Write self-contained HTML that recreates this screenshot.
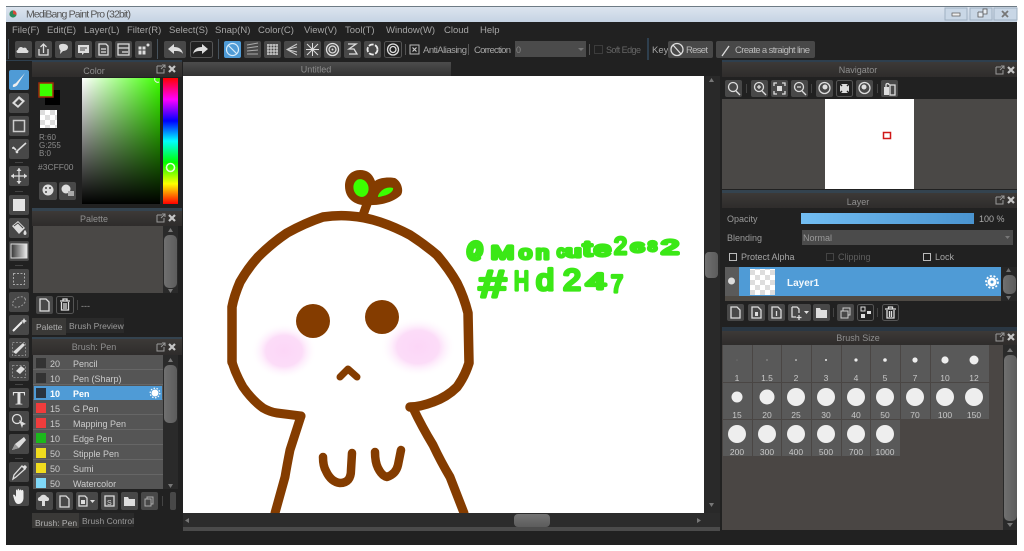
<!DOCTYPE html>
<html><head><meta charset="utf-8"><title>MediBang Paint Pro</title>
<style>
html,body{margin:0;padding:0;background:#fff;width:1024px;height:551px;overflow:hidden}
svg{display:block;font-family:"Liberation Sans",sans-serif}
.ui{filter:blur(.25px)}
text{font-size:9px;fill:#a9a9a9}
.m text,text.m{font-size:9.5px;fill:#a5a5a5}
.h{text-anchor:middle;fill:#8f8f8f;font-size:9px}
.b{fill:#484848}
.bd{fill:#222;stroke:#555;stroke-width:1}
.i{fill:#ddd}
.s{fill:none;stroke:#ddd;stroke-width:1.3}
.d{fill:#6f6f6f}
.c{fill:#595959}
.w{fill:#eee}
.l{text-anchor:middle;font-size:8.5px;fill:#c8c8c8}
.r text,text.r{font-size:9.5px;fill:#d0d0d0}
.g text{fill:#3be816;stroke:#3be816;stroke-width:3.2;stroke-linejoin:round;stroke-linecap:round;font-weight:normal;font-family:"Liberation Sans",sans-serif}
.br{fill:none;stroke:#843c00;stroke-linecap:round;stroke-linejoin:round}
</style></head><body>
<svg width="1024" height="551" viewBox="0 0 1024 551" xmlns="http://www.w3.org/2000/svg">
<defs>
<linearGradient id="tb" x1="0" y1="0" x2="0" y2="1"><stop offset="0" stop-color="#dde5ef"/><stop offset="1" stop-color="#c5d3e3"/></linearGradient>
<linearGradient id="ph" x1="0" y1="0" x2="0" y2="1"><stop offset="0" stop-color="#3c3937"/><stop offset="1" stop-color="#2e2c2b"/></linearGradient>
<linearGradient id="tab" x1="0" y1="0" x2="0" y2="1"><stop offset="0" stop-color="#4c4c4c"/><stop offset="1" stop-color="#333"/></linearGradient>
<linearGradient id="sat"><stop offset="0" stop-color="#fff"/><stop offset="1" stop-color="#3cff00"/></linearGradient>
<linearGradient id="val" x1="0" y1="0" x2="0" y2="1"><stop offset="0" stop-color="#000" stop-opacity="0"/><stop offset="1" stop-color="#000"/></linearGradient>
<linearGradient id="hue" x1="0" y1="0" x2="0" y2="1"><stop offset="0" stop-color="#f00"/><stop offset=".17" stop-color="#f0f"/><stop offset=".34" stop-color="#00f"/><stop offset=".5" stop-color="#0ff"/><stop offset=".67" stop-color="#0f0"/><stop offset=".84" stop-color="#ff0"/><stop offset="1" stop-color="#f00"/></linearGradient>
<linearGradient id="op"><stop offset="0" stop-color="#72bdf2"/><stop offset="1" stop-color="#4a94d0"/></linearGradient>
<linearGradient id="sb"><stop offset="0" stop-color="#707070"/><stop offset="1" stop-color="#5c5c5c"/></linearGradient>
<linearGradient id="sbh" x1="0" y1="0" x2="0" y2="1"><stop offset="0" stop-color="#747474"/><stop offset="1" stop-color="#5c5c5c"/></linearGradient>
<linearGradient id="gr2"><stop offset="0" stop-color="#333"/><stop offset="1" stop-color="#eee"/></linearGradient>
<radialGradient id="pk"><stop offset="0" stop-color="#fcd6f7"/><stop offset=".55" stop-color="#fcdcf8"/><stop offset="1" stop-color="#fff" stop-opacity="0"/></radialGradient>
<pattern id="ck" width="10" height="10" patternUnits="userSpaceOnUse"><rect width="10" height="10" fill="#fff"/><rect width="5" height="5" fill="#ddd"/><rect x="5" y="5" width="5" height="5" fill="#ddd"/></pattern>
<g id="hd"><path d="M0 1h5M0 1v7h7V4M5 0l3 0v3M8 0L4 4" fill="none" stroke="#9a9a9a" stroke-width="1"/><path d="M12 1l6 6M18 1l-6 6" stroke="#c5c5c5" stroke-width="2.2"/></g>
</defs>
<rect width="1024" height="551" fill="#fff"/>
<g class="ui">
<rect x="6" y="6" width="1011" height="539" fill="#212121"/>
<!-- title bar -->
<rect x="6" y="6" width="1011" height="16" fill="url(#tb)"/>
<rect x="6" y="6" width="1011" height="1" fill="#6e7b85"/>
<circle cx="13" cy="14" r="3.6" fill="#2c8a5a"/><path d="M13 10.4a3.6 3.6 0 0 1 3.4 4.6L13 14z" fill="#d9483b"/>
<text x="26" y="17.5" style="font-size:10.5px;fill:#555" textLength="105">MediBang Paint Pro (32bit)</text>
<rect x="945" y="8" width="22" height="12" fill="#c9d7e6" stroke="#9fb0c2"/><rect x="952" y="13" width="8" height="3" fill="#eee" stroke="#555" stroke-width=".7"/>
<rect x="970" y="8" width="22" height="12" fill="#c9d7e6" stroke="#9fb0c2"/><path d="M978 12h5v-3h4v5h-4M978 12v5h5v-5" fill="#e8eef4" stroke="#555" stroke-width=".8"/>
<rect x="994" y="8" width="23" height="12" fill="#c9d7e6" stroke="#9fb0c2"/><path d="M1002 11l6 6M1008 11l-6 6" stroke="#777" stroke-width="1.8"/>
<!-- menu -->
<g class="m">
<text x="12" y="33">File(F)</text><text x="47" y="33">Edit(E)</text><text x="84" y="33">Layer(L)</text><text x="127" y="33">Filter(R)</text><text x="169" y="33">Select(S)</text><text x="215" y="33">Snap(N)</text><text x="258" y="33">Color(C)</text><text x="304" y="33">View(V)</text><text x="345" y="33">Tool(T)</text><text x="386" y="33">Window(W)</text><text x="444" y="33">Cloud</text><text x="480" y="33">Help</text>
</g>
<!-- toolbar -->
<rect x="8" y="39" width="1" height="20" fill="#46525c"/>
<rect class="b" x="15" y="41" width="17" height="17" rx="2"/><path d="M18 53c-2 0-2-3 0-3 0-3 4-4 5-2 2-1 4 0 4 2 2 0 2 3 0 3z" class="i"/>
<rect class="b" x="35" y="41" width="17" height="17" rx="2"/><path d="M39 49v6h9v-6M43.500 53v-9M40.500 47l3-3 3 3" class="s"/>
<rect class="b" x="55" y="41" width="17" height="17" rx="2"/><path d="M59 46c0-3 9-3 9 1 0 3-3 4-5 4l-3 3 .5-3.500c-1-1-1.500-3-1.500-4.500z" class="i"/>
<rect class="b" x="75" y="41" width="17" height="17" rx="2"/><path d="M78 45h11v8h-5l-2 2v-2h-4z" class="i"/><path d="M80 48h7M80 50h5" stroke="#484848"/>
<rect class="b" x="95" y="41" width="17" height="17" rx="2"/><path d="M99 44h7l2 2v9H99zM101 49h5M101 52h5" class="s"/>
<rect class="b" x="115" y="41" width="17" height="17" rx="2"/><path d="M118 44h11v11h-11zM118 48h11M122 52h6" class="s"/>
<rect class="b" x="135" y="41" width="17" height="17" rx="2"/><path d="M138 46h8v9h-8zM142 46v9M138 50h8" stroke="#484848" fill="#ddd"/><circle cx="148" cy="45" r="1.500" class="i"/>
<rect x="157" y="39" width="1" height="20" fill="#46525c"/>
<rect class="b" x="164" y="41" width="22" height="17" rx="2"/><path d="M168 49l6-5v3c5 0 8 2 9 7-2-3-5-3-9-3v3z" class="i"/>
<rect class="bd" x="190.500" y="41.500" width="22" height="16" rx="2"/><path d="M208 49l-6-5v3c-5 0-8 2-9 7 2-3 5-3 9-3v3z" class="i"/>
<rect x="218" y="39" width="1" height="20" fill="#46525c"/>
<rect x="224" y="41" width="17" height="17" rx="2" fill="#4f9bd6"/><circle cx="232.500" cy="49.500" r="6" fill="none" stroke="#d8ecfa" stroke-width="1.200"/><path d="M228 45l9 9" stroke="#d8ecfa" stroke-width="1.200"/>
<rect class="b" x="244" y="41" width="17" height="17" rx="2"/><path d="M247 45l11-2M247 48l11-1.500M247 51l11-1M247 54l11 0" stroke="#aaa"/>
<rect class="b" x="264" y="41" width="17" height="17" rx="2"/><path d="M267 45h11M267 48h11M267 51h11M267 54h11M268 44v11M271 44v11M274 44v11M277 44v11" stroke="#ddd"/>
<rect class="b" x="284" y="41" width="17" height="17" rx="2"/><path d="M297 44l-10 5.500 10 5.500M297 47l-10 2.500 10 2.500" stroke="#ccc" fill="none"/>
<rect class="b" x="304" y="41" width="17" height="17" rx="2"/><path d="M307 44l11 11M318 44l-11 11M312.500 43v13M306 49.500h13" stroke="#ddd"/>
<rect class="b" x="324" y="41" width="17" height="17" rx="2"/><circle cx="332.500" cy="49.500" r="6" class="s"/><circle cx="332.500" cy="49.500" r="3.500" class="s"/><circle cx="332.500" cy="49.500" r="1" class="i"/>
<rect class="b" x="344" y="41" width="17" height="17" rx="2"/><path d="M348 44h8l-7 5 5 0 3 5h-8" class="s"/>
<rect class="b" x="364" y="41" width="17" height="17" rx="2"/><circle cx="372.500" cy="49.500" r="5" fill="none" stroke="#eee" stroke-width="1.800" stroke-dasharray="5 1.500"/>
<rect class="bd" x="384.500" y="41.500" width="17" height="16" rx="2"/><circle cx="393" cy="49.500" r="5.500" class="s"/><circle cx="393" cy="49.500" r="3" class="s"/>
<rect x="405" y="44" width="1" height="11" fill="#555"/>
<rect x="410" y="45" width="9" height="9" fill="none" stroke="#bbb"/><path d="M412.500 47.500l4 4M416.500 47.500l-4 4" stroke="#ccc" stroke-width="1.200"/>
<text x="423" y="53" class="m" textLength="44">AntiAliasing</text>
<rect x="468" y="44" width="1" height="11" fill="#555"/>
<text x="474" y="53" class="m" textLength="37">Correction</text>
<rect x="515" y="41" width="71" height="16" fill="#4b4b4b"/>
<text x="516" y="53" style="fill:#888">0</text><path d="M578 48h6l-3 3z" fill="#777"/>
<rect x="589" y="44" width="1" height="11" fill="#555"/>
<rect x="594.500" y="45.500" width="8" height="8" fill="none" stroke="#3c3c3c"/>
<text x="606" y="53" style="fill:#666" textLength="35">Soft Edge</text>
<rect x="647" y="38" width="2" height="22" fill="#2e3f4e"/>
<text x="652" y="53" class="m">Key</text>
<rect class="b" x="668" y="41" width="45" height="17" rx="2"/><circle cx="677" cy="49.500" r="6" class="s"/><path d="M673 45l8 9" class="s"/><text x="686" y="53" class="m" style="fill:#bbb" textLength="22">Reset</text>
<rect class="b" x="716" y="41" width="99" height="17" rx="2"/><path d="M722 56l7-10" stroke="#ddd" stroke-width="1.300"/><text x="735" y="53" class="m" style="fill:#bbb" textLength="75">Create a straight line</text>

<!-- tool column -->
<rect x="6" y="60" width="26" height="1" fill="#2e3f4e"/>
<rect x="9" y="70" width="20" height="20" rx="2" fill="#4f9bd6"/><path d="M13 87c-1-3 2-3 3-4l9-10-7 11c-1 2-3 3-5 3z" fill="#eee"/>
<rect class="b" x="9" y="93" width="20" height="20" rx="2"/><path d="M12 103l7-7 6 5-7 7z" class="i"/><path d="M15 103l4-4 3 2.500-4 4z" fill="#484848"/>
<rect class="b" x="9" y="116" width="20" height="20" rx="2"/><rect x="13.500" y="120.500" width="11" height="11" fill="none" stroke="#ccc" stroke-width="1.500"/>
<rect class="b" x="9" y="139" width="20" height="20" rx="2"/><path d="M13 147l3 3M26 143l-10 9" stroke="#ddd" stroke-width="1.600" fill="none"/><circle cx="13" cy="148" r="1" class="i"/><circle cx="17" cy="152" r="1.300" class="i"/>
<rect x="15" y="162" width="8" height="1" fill="#444"/>
<rect class="b" x="9" y="166" width="20" height="20" rx="2"/><path d="M19 168v16M11 176h16" stroke="#ddd" stroke-width="1.200"/><path d="M19 168l-2.500 3h5zM19 184l-2.500-3h5zM11 176l3-2.500v5zM27 176l-3-2.500v5z" class="i"/>
<rect x="15" y="191" width="8" height="1" fill="#444"/>
<rect class="b" x="9" y="195" width="20" height="20" rx="2"/><rect x="13" y="199" width="12" height="12" fill="#e4e4e4"/>
<rect class="b" x="9" y="218" width="20" height="20" rx="2"/><path d="M12 226l6-5 7 7-6 6z" class="i"/><path d="M14 226l4-3 5 5" stroke="#484848" fill="none"/><path d="M25 230c2 2 2 5 0 5s-2-3 0-5z" class="i"/>
<rect class="b" x="9" y="241" width="20" height="20" rx="2"/><rect x="11" y="244" width="16" height="14" fill="url(#gr2)" stroke="#ddd"/>
<rect x="15" y="265" width="8" height="1" fill="#444"/>
<rect class="b" x="9" y="269" width="20" height="20" rx="2"/><rect x="13.500" y="273.500" width="11" height="11" fill="none" stroke="#aaa" stroke-dasharray="2 1.500"/>
<rect class="b" x="9" y="292" width="20" height="20" rx="2"/><ellipse cx="19" cy="302" rx="7" ry="4.500" transform="rotate(-30 19 302)" fill="none" stroke="#999" stroke-dasharray="2 1.500"/>
<rect class="b" x="9" y="315" width="20" height="20" rx="2"/><path d="M13 331l9-9" stroke="#eee" stroke-width="2"/><path d="M24 318l1 2 2 1-2 1-1 2-1-2-2-1 2-1z" class="i"/>
<rect class="b" x="9" y="338" width="20" height="20" rx="2"/><path d="M13 352l10-9 2 2-9 9z" class="i"/><rect x="12.500" y="342.500" width="13" height="13" fill="none" stroke="#888" stroke-dasharray="2 1.500"/>
<rect class="b" x="9" y="361" width="20" height="20" rx="2"/><path d="M16 371l5-5 4 3-5 5z" class="i"/><rect x="12.500" y="365.500" width="13" height="12" fill="none" stroke="#888" stroke-dasharray="2 1.500"/>
<rect x="15" y="384" width="8" height="1" fill="#444"/>
<rect class="b" x="9" y="388" width="20" height="20" rx="2"/><text x="19" y="404.500" style="font-family:'Liberation Serif',serif;font-size:19px;font-weight:bold;fill:#e4e4e4;text-anchor:middle">T</text>
<rect class="b" x="9" y="411" width="20" height="20" rx="2"/><circle cx="17" cy="419" r="4.500" class="s"/><path d="M19 420l7 4-3 1-1 3z" class="i"/>
<rect class="b" x="9" y="434" width="20" height="20" rx="2"/><path d="M12 450l3-6 9-7 2 3-7 8z" class="i"/><path d="M12 450l3-6 4 4z" fill="#999"/>
<rect x="15" y="458" width="8" height="1" fill="#444"/>
<rect class="b" x="9" y="462" width="20" height="20" rx="2"/><path d="M13 479l1-4 8-9 3 3-9 8z" class="s"/><path d="M22 467l3-2 2 2-2 3z" class="i"/>
<rect class="b" x="9" y="486" width="20" height="20" rx="2"/><path d="M13 495c1-1 2 0 3 2v-6c0-2 1-2 1.500 0 0-3 1.500-3 2 0 0-2 2-2 2 0 .5-2 2-1 2 1v6c0 3-2 6-5 6-3 0-4-3-5.500-9z" fill="#eee"/>

<!-- Color panel -->
<rect x="32" y="60" width="150" height="2" fill="#2e3f4e"/>
<rect x="32" y="62" width="150" height="15" fill="url(#ph)"/>
<text x="94" y="74" class="h">Color</text><use href="#hd" x="157" y="65"/>
<rect x="45" y="90" width="15" height="15" fill="#000"/>
<rect x="39" y="83" width="14" height="14" fill="#3cff00" stroke="#a0280c" stroke-width="1.500"/>
<rect x="40" y="110" width="17" height="18" fill="url(#ck)"/>
<text x="39" y="140" style="font-size:8px;fill:#8c8c8c">R:60</text><text x="39" y="148" style="font-size:8px;fill:#8c8c8c">G:255</text><text x="39" y="156" style="font-size:8px;fill:#8c8c8c">B:0</text><text x="38" y="170" style="font-size:8.5px;fill:#8c8c8c">#3CFF00</text>
<rect class="b" x="39" y="182" width="18" height="18" rx="2"/><circle cx="48" cy="190" r="5.500" class="i"/><circle cx="46" cy="188" r="1" fill="#484848"/><circle cx="50" cy="188" r="1" fill="#484848"/><circle cx="46" cy="192" r="1" fill="#484848"/>
<rect class="b" x="59" y="182" width="17" height="18" rx="2"/><circle cx="66" cy="189" r="4.500" class="i"/><rect x="68" y="191" width="6" height="5" fill="#aaa"/>
<rect x="82" y="78" width="78" height="126" fill="url(#sat)"/><rect x="82" y="78" width="78" height="126" fill="url(#val)"/>
<path d="M155 78a3 3 0 0 0 4 4" fill="none" stroke="#eee"/>
<rect x="163" y="78" width="15" height="126" fill="url(#hue)"/>
<circle cx="170.500" cy="167.500" r="4" fill="none" stroke="#e5ffd8" stroke-width="1.600"/>

<!-- Palette -->
<rect x="32" y="208" width="150" height="3" fill="#34434f"/>
<rect x="32" y="211" width="150" height="15" fill="url(#ph)"/>
<text x="94" y="222" class="h">Palette</text><use href="#hd" x="157" y="214"/>
<rect x="33" y="226" width="130" height="67" fill="#4a4846"/>
<rect x="163" y="226" width="15" height="67" fill="#2a2a2a"/>
<rect x="164" y="235" width="13" height="53" rx="5" fill="url(#sb)"/>
<path d="M168 232l2.500-4 2.500 4zM168 289l2.500 4 2.500-4z" fill="#777"/>
<rect x="36" y="296" width="17" height="18" rx="2" class="b"/><path d="M40 299h6l3 3v9h-9z" class="s"/>
<rect class="bd" x="56.500" y="296.500" width="17" height="17" rx="2"/><path d="M60 301h10M61.500 302v8h7v-8M64 303v6M66 303v6M63 301v-2h4v2" class="s"/>
<rect x="77" y="300" width="1" height="10" fill="#444"/>
<text x="81" y="309" style="fill:#999">---</text>
<rect x="32" y="318" width="34" height="17" fill="#3a3937"/>
<text x="36" y="330" style="fill:#b0b0b0;font-size:8.5px">Palette</text>
<rect x="66" y="318" width="58" height="15" fill="#2a2a2a"/>
<text x="69" y="329" style="fill:#9a9a9a;font-size:8.5px">Brush Preview</text>
<rect x="32" y="337" width="150" height="2" fill="#34434f"/>

<!-- Brush panel -->
<rect x="32" y="339" width="150" height="16" fill="url(#ph)"/>
<text x="94" y="350" class="h">Brush: Pen</text><use href="#hd" x="157" y="343"/>
<rect x="33" y="355" width="130" height="134" fill="#555"/>
<g fill="#666"><rect x="33" y="369" width="130" height="1"/><rect x="33" y="384" width="130" height="1"/><rect x="33" y="399" width="130" height="1"/><rect x="33" y="414" width="130" height="1"/><rect x="33" y="429" width="130" height="1"/><rect x="33" y="444" width="130" height="1"/><rect x="33" y="459" width="130" height="1"/><rect x="33" y="474" width="130" height="1"/></g>
<rect x="34" y="386" width="128" height="14" fill="#4f9bd6"/>
<rect x="36" y="358" width="10" height="10" fill="#333"/>
<rect x="36" y="373" width="10" height="10" fill="#333"/>
<rect x="36" y="388" width="10" height="10" fill="#2a3440"/>
<rect x="36" y="403" width="10" height="10" fill="#f03c3c"/>
<rect x="36" y="418" width="10" height="10" fill="#f03c3c"/>
<rect x="36" y="433" width="10" height="10" fill="#1cb81c"/>
<rect x="36" y="448" width="10" height="10" fill="#f0dc1e"/>
<rect x="36" y="463" width="10" height="10" fill="#f0dc1e"/>
<rect x="36" y="478" width="10" height="10" fill="#7fd8f8"/>
<text x="50" y="367" style="fill:#ccc">20</text><text x="73" y="367" style="fill:#ccc">Pencil</text>
<text x="50" y="382" style="fill:#ccc">10</text><text x="73" y="382" style="fill:#ccc">Pen (Sharp)</text>
<text x="50" y="397" style="fill:#fff;font-weight:bold">10</text><text x="73" y="397" style="fill:#fff;font-weight:bold">Pen</text>
<text x="50" y="412" style="fill:#ccc">15</text><text x="73" y="412" style="fill:#ccc">G Pen</text>
<text x="50" y="427" style="fill:#ccc">15</text><text x="73" y="427" style="fill:#ccc">Mapping Pen</text>
<text x="50" y="442" style="fill:#ccc">10</text><text x="73" y="442" style="fill:#ccc">Edge Pen</text>
<text x="50" y="457" style="fill:#ccc">50</text><text x="73" y="457" style="fill:#ccc">Stipple Pen</text>
<text x="50" y="472" style="fill:#ccc">50</text><text x="73" y="472" style="fill:#ccc">Sumi</text>
<text x="50" y="487" style="fill:#ccc">50</text><text x="73" y="487" style="fill:#ccc">Watercolor</text>
<circle cx="155" cy="393" r="3.500" fill="#fff"/><circle cx="155" cy="393" r="4.800" fill="none" stroke="#fff" stroke-width="1.200" stroke-dasharray="1.500 1.500"/>
<rect x="163" y="355" width="15" height="134" fill="#2a2a2a"/>
<rect x="164" y="365" width="13" height="58" rx="5" fill="url(#sb)"/>
<path d="M168 362l2.500-4 2.500 4zM168 484l2.500 4 2.500-4z" fill="#777"/>
<rect class="b" x="36" y="492" width="17" height="18" rx="2"/><path d="M39 501c-2-1-1-4 1-4 1-3 6-3 7 0 2 0 3 3 1 4h-3v5h-3v-5z" class="i"/>
<rect class="b" x="56" y="492" width="17" height="18" rx="2"/><path d="M60 496h6l3 3v8h-9z" class="s"/>
<rect class="b" x="76" y="492" width="22" height="18" rx="2"/><path d="M79 496h6l2 2v8h-8z" class="s"/><rect x="81" y="500" width="4" height="4" class="i"/><path d="M90 500h5l-2.500 3z" class="i"/>
<rect class="b" x="101" y="492" width="17" height="18" rx="2"/><path d="M105 496h9v10h-9z" class="s"/><text x="107" y="505" style="font-size:7px;fill:#ddd">S</text>
<rect class="b" x="121" y="492" width="17" height="18" rx="2"/><path d="M124 497h4l1 2h6v7h-11z" class="i"/>
<rect class="b" x="141" y="492" width="17" height="18" rx="2"/><path d="M145 499h6v7h-6zM147 499v-2h6v7h-2" fill="none" stroke="#aaa"/>
<rect x="162" y="496" width="1" height="10" fill="#444"/>
<rect x="170" y="492" width="6" height="18" rx="2" fill="#484848"/>
<rect x="32" y="513" width="47" height="15" fill="#3a3937"/>
<text x="35" y="526" style="fill:#b0b0b0;font-size:8.5px">Brush: Pen</text>
<rect x="79" y="513" width="55" height="14" fill="#2a2a2a"/>
<text x="82" y="524" style="fill:#9a9a9a;font-size:8.5px">Brush Control</text>

<!-- Canvas header -->
<rect x="183" y="62" width="268" height="14" fill="url(#tab)"/>
<text x="316" y="72.500" class="h">Untitled</text>
</g>

<!-- Canvas -->
<rect x="183" y="76" width="521" height="437" fill="#fff"/>
<ellipse cx="284" cy="351" rx="33" ry="28" fill="url(#pk)"/>
<ellipse cx="418" cy="347" rx="38" ry="30" fill="url(#pk)"/>
<path class="br" stroke-width="9.500" d="M232 362V307Q234 296 240 282Q248 268 258 257Q272 243 287 233Q305 223 323 217Q337 215 350 216Q365 217 380 222Q395 227 410 235Q424 244 437 255Q449 269 457 283Q464 297 468 313L469 363Q465 376 457 387Q447 397 433 402Q420 407 410 407"/>
<path class="br" stroke-width="9" d="M232 362Q236 375 243 387Q252 400 263 408Q270 412 277 413L301 416"/>
<path class="br" stroke-width="9" d="M301 416L290 450Q287 465 285 477L275 513"/>
<path class="br" stroke-width="9" d="M413 408Q422 427 433 445Q441 462 450 477L464 513"/>
<path class="br" stroke-width="7" d="M340 377L348 369L357 377"/>
<path class="br" stroke-width="8.500" d="M323 457Q323 466 326 471Q331 482 340 483Q351 483 351 470L352 453"/>
<path class="br" stroke-width="8.500" d="M375 452Q375 462 378 468Q382 476 387 477Q396 474 398 465L401 450"/>
<circle cx="313" cy="321" r="17" fill="#843c00"/><circle cx="382" cy="317" r="17" fill="#843c00"/>
<path class="br" stroke-width="9" d="M367 204L363 215"/>
<path d="M345 186C345 176 352 170 360 170C367 170 372 173 375 181C380 177 390 177 395 178C401 181 404 190 401 195C394 202 380 206 367 205C357 206 345 200 345 186Z" fill="#843c00"/>
<ellipse cx="361" cy="188" rx="7.500" ry="9" fill="#3cff00" transform="rotate(-15 361 188)"/>
<path d="M378 196C380 190 387 186 393 188C394 192 387 196 378 197Z" fill="#3cff00"/>
<g class="g">
<text x="466" y="257" style="font-size:21px" textLength="18" lengthAdjust="spacingAndGlyphs">@</text>
<text x="491" y="259" style="font-size:18px" textLength="23" lengthAdjust="spacingAndGlyphs">M</text>
<text x="519" y="259" style="font-size:18px" textLength="13" lengthAdjust="spacingAndGlyphs">o</text>
<text x="536" y="259" style="font-size:18px" textLength="13" lengthAdjust="spacingAndGlyphs">n</text>
<text x="557" y="257" style="font-size:16px" textLength="8" lengthAdjust="spacingAndGlyphs">c</text>
<text x="566" y="257" style="font-size:16px" textLength="15" lengthAdjust="spacingAndGlyphs">u</text>
<text x="583" y="256" style="font-size:21px" textLength="9" lengthAdjust="spacingAndGlyphs">t</text>
<text x="594" y="256" style="font-size:20px" textLength="17" lengthAdjust="spacingAndGlyphs">e</text>
<text x="614" y="254" style="font-size:24px" textLength="13" lengthAdjust="spacingAndGlyphs">2</text>
<text x="631" y="252" style="font-size:13px" textLength="13" lengthAdjust="spacingAndGlyphs">6</text>
<text x="648" y="251" style="font-size:14px" textLength="9" lengthAdjust="spacingAndGlyphs">8</text>
<text x="661" y="254" style="font-size:20px" textLength="18" lengthAdjust="spacingAndGlyphs">2</text>
<text x="479" y="297" style="font-size:38px" textLength="27" lengthAdjust="spacingAndGlyphs">#</text>
<text x="514" y="290" style="font-size:27px" textLength="15" lengthAdjust="spacingAndGlyphs">H</text>
<text x="536" y="290" style="font-size:30px" textLength="18" lengthAdjust="spacingAndGlyphs">d</text>
<text x="563" y="290" style="font-size:30px" textLength="18" lengthAdjust="spacingAndGlyphs">2</text>
<text x="586" y="289" style="font-size:22px" textLength="20" lengthAdjust="spacingAndGlyphs">4</text>
<text x="611" y="292" style="font-size:24px" textLength="12" lengthAdjust="spacingAndGlyphs">7</text>
</g>

<g class="ui">
<!-- canvas scrollbars -->
<rect x="704" y="76" width="16" height="452" fill="#292929"/>
<rect x="705" y="252" width="13" height="26" rx="4" fill="url(#sb)"/>
<path d="M709 82l2.500-4 2.500 4zM709 503l2.500 4 2.500-4z" fill="#777"/>
<rect x="183" y="513" width="537" height="15" fill="#2c2c2c"/>
<rect x="183" y="527" width="537" height="4" fill="#4b4b4b"/>
<rect x="183" y="531" width="537" height="14" fill="#212121"/>
<rect x="514" y="514" width="36" height="13" rx="4" fill="url(#sbh)"/>
<path d="M189 518v5l-4-2.500zM697 518v5l4-2.500z" fill="#777"/>

<!-- Navigator -->
<rect x="722" y="60" width="295" height="2" fill="#2e3f4e"/>
<rect x="722" y="62" width="295" height="15" fill="url(#ph)"/>
<text x="858" y="73" class="h">Navigator</text><use href="#hd" x="996" y="66"/>
<rect class="b" x="725" y="80" width="17" height="17" rx="2"/><circle cx="733" cy="87" r="4.500" class="s"/><path d="M736 91l4 4" class="s"/>
<rect x="746" y="84" width="1" height="9" fill="#444"/>
<rect class="b" x="751" y="80" width="17" height="17" rx="2"/><circle cx="759" cy="87" r="4.500" class="s"/><path d="M762 91l4 4M757 87h4M759 85v4" class="s"/>
<rect class="b" x="771" y="80" width="17" height="17" rx="2"/><path d="M774 86v-3h3M785 86v-3h-3M774 91v3h3M785 91v3h-3" class="s"/><rect x="777" y="86" width="5" height="5" class="i"/>
<rect class="b" x="791" y="80" width="17" height="17" rx="2"/><circle cx="799" cy="87" r="4.500" class="s"/><path d="M802 91l4 4M797 87h4" class="s"/>
<rect x="811" y="84" width="1" height="9" fill="#444"/>
<rect class="b" x="816" y="80" width="17" height="17" rx="2"/><circle cx="824.500" cy="88" r="5.500" class="s"/><circle cx="825" cy="87" r="2.500" class="i"/>
<rect class="bd" x="836.500" y="80.500" width="16" height="16" rx="2"/><path d="M840 84h9v9h-9z" class="i"/><path d="M840 84l2 2M849 84l-2 2M840 93l2-2M849 93l-2-2" stroke="#222" stroke-width="1.500"/>
<rect class="b" x="856" y="80" width="17" height="17" rx="2"/><circle cx="864.500" cy="88" r="5.500" class="s"/><circle cx="864" cy="87" r="2.500" class="i"/>
<rect x="877" y="84" width="1" height="9" fill="#444"/>
<rect class="b" x="881" y="80" width="17" height="17" rx="2"/><path d="M884 87h5v8h-5z" class="i"/><path d="M890 85h5v10h-5z" class="s"/><path d="M886 87v-2c0-2 3-2 3 0" class="s"/>
<rect x="722" y="99" width="295" height="90" fill="#4a4846"/>
<rect x="825" y="99" width="89" height="90" fill="#fff"/>
<rect x="883.500" y="132.500" width="7" height="6" fill="#fff" stroke="#d01818" stroke-width="1.500"/>

<!-- Layer -->
<rect x="722" y="190" width="295" height="3" fill="#34434f"/>
<rect x="722" y="193" width="295" height="15" fill="url(#ph)"/>
<text x="858" y="205" class="h">Layer</text><use href="#hd" x="996" y="196"/>
<text x="727" y="222" style="fill:#9a9a9a">Opacity</text>
<rect x="801" y="213" width="173" height="11" fill="url(#op)"/>
<text x="979" y="222" style="fill:#aaa">100 %</text>
<text x="727" y="241" style="fill:#9a9a9a">Blending</text>
<rect x="802" y="230" width="211" height="15" fill="#4b4b4b"/>
<text x="803" y="241" style="fill:#999">Normal</text><path d="M1005 236h5l-2.500 3z" fill="#777"/>
<rect x="729.500" y="253.500" width="7" height="7" fill="none" stroke="#bbb"/>
<text x="741" y="260" style="fill:#a5a5a5">Protect Alpha</text>
<rect x="826.500" y="253.500" width="7" height="7" fill="none" stroke="#444"/>
<text x="838" y="260" style="fill:#5e5e5e">Clipping</text>
<rect x="923.500" y="253.500" width="7" height="7" fill="none" stroke="#bbb"/>
<text x="935" y="260" style="fill:#a5a5a5">Lock</text>
<rect x="725" y="267" width="276" height="29" fill="#4f9bd6"/>
<rect x="725" y="267" width="14" height="29" fill="#5a5a5a"/>
<circle cx="731.500" cy="281" r="3.500" fill="#ddd"/>
<rect x="725" y="296" width="276" height="5" fill="#4f4a44"/>
<rect x="750" y="269" width="25" height="26" fill="url(#ck)"/>
<text x="787" y="286" style="font-size:10px;font-weight:bold;fill:#f2f8fc">Layer1</text>
<circle cx="992" cy="282" r="4.500" fill="#fff"/><circle cx="992" cy="282" r="6" fill="none" stroke="#fff" stroke-width="1.800" stroke-dasharray="2 1.700"/><circle cx="992" cy="282" r="1.500" fill="#4f9bd6"/>
<rect x="1001" y="267" width="16" height="34" fill="#262626"/>
<rect x="1003" y="275" width="13" height="19" rx="5" fill="url(#sb)"/>
<path d="M1006 272l2.500-4 2.500 4zM1006 296l2.500 4 2.500-4z" fill="#6f6f6f"/>
<rect class="b" x="727" y="304" width="17" height="17" rx="2"/><path d="M731 307h6l3 3v8h-9z" class="s"/>
<rect class="b" x="748" y="304" width="17" height="17" rx="2"/><path d="M752 307h6l3 3v8h-9z" class="s"/><rect x="755" y="312" width="3" height="4" class="i"/>
<rect class="b" x="768" y="304" width="17" height="17" rx="2"/><path d="M772 307h6l3 3v8h-9zM776.500 316v-5" class="s"/>
<rect class="b" x="788" y="304" width="23" height="17" rx="2"/><path d="M792 307h5l2 2v4M792 307v10h4M799 315v5M796.500 317.500h5" class="s"/><path d="M804 311h5l-2.500 3z" class="i"/>
<rect class="b" x="813" y="304" width="17" height="17" rx="2"/><path d="M816 308h4l1 2h6v8h-11z" class="i"/>
<rect x="833" y="308" width="1" height="9" fill="#444"/>
<rect class="b" x="837" y="304" width="17" height="17" rx="2"/><path d="M841 311h7v7h-7zM843 311v-3h7v7h-2" fill="none" stroke="#ccc"/>
<rect class="bd" x="857.500" y="304.500" width="16" height="16" rx="2"/><rect x="861" y="307" width="4" height="4" fill="none" stroke="#ddd"/><rect x="861" y="314" width="4" height="4" class="i"/><rect x="867" y="311" width="4" height="3" class="i"/>
<rect x="877" y="308" width="1" height="9" fill="#444"/>
<rect class="bd" x="882.500" y="304.500" width="16" height="16" rx="2"/><path d="M885 309h11M887 310v8h7v-8M889.500 311v6M891.500 311v6M888.500 309v-2h4v2" class="s"/>

<!-- Brush size -->
<rect x="722" y="327" width="295" height="4" fill="#2a3743"/>
<rect x="722" y="331" width="295" height="14" fill="url(#ph)"/>
<text x="858" y="341" class="h">Brush Size</text><use href="#hd" x="996" y="333"/>
<rect x="722" y="345" width="281" height="185" fill="#4a4644"/>
<rect x="1003" y="345" width="14" height="185" fill="#2a2a2a"/>
<rect x="1004" y="355" width="13" height="166" rx="5" fill="url(#sb)"/>
<path d="M1007 352l3-4 3 4zM1007 523l3 4 3-4z" fill="#777"/>
<g class="c">
<rect x="723" y="345" width="29" height="37"/><rect x="753" y="345" width="28" height="37"/><rect x="782" y="345" width="29" height="37"/><rect x="812" y="345" width="29" height="37"/><rect x="842" y="345" width="28" height="37"/><rect x="871" y="345" width="29" height="37"/><rect x="901" y="345" width="29" height="37"/><rect x="931" y="345" width="29" height="37"/><rect x="960" y="345" width="29" height="37"/>
<rect x="723" y="383" width="29" height="36"/><rect x="753" y="383" width="28" height="36"/><rect x="782" y="383" width="29" height="36"/><rect x="812" y="383" width="29" height="36"/><rect x="842" y="383" width="28" height="36"/><rect x="871" y="383" width="29" height="36"/><rect x="901" y="383" width="29" height="36"/><rect x="931" y="383" width="29" height="36"/><rect x="960" y="383" width="29" height="36"/>
<rect x="723" y="420" width="29" height="36"/><rect x="753" y="420" width="28" height="36"/><rect x="782" y="420" width="29" height="36"/><rect x="812" y="420" width="29" height="36"/><rect x="842" y="420" width="28" height="36"/><rect x="871" y="420" width="29" height="36"/>
</g>
<g class="w">
<circle cx="737" cy="360" r=".3"/><circle cx="767" cy="360" r=".5"/><circle cx="796" cy="360" r=".8"/><circle cx="826" cy="360" r="1"/><circle cx="856" cy="360" r="1.600"/><circle cx="885" cy="360" r="1.800"/><circle cx="915" cy="360" r="2.600"/><circle cx="945" cy="360" r="3.600"/><circle cx="974" cy="360" r="4.500"/>
<circle cx="737" cy="397" r="5.500"/><circle cx="767" cy="397" r="7.500"/><circle cx="796" cy="397" r="9"/><circle cx="826" cy="397" r="9"/><circle cx="856" cy="397" r="9"/><circle cx="885" cy="397" r="9"/><circle cx="915" cy="397" r="9"/><circle cx="945" cy="397" r="9"/><circle cx="974" cy="397" r="9"/>
<circle cx="737" cy="434" r="9"/><circle cx="767" cy="434" r="9"/><circle cx="796" cy="434" r="9"/><circle cx="826" cy="434" r="9"/><circle cx="856" cy="434" r="9"/><circle cx="885" cy="434" r="9"/>
</g>
<text class="l" x="737" y="381">1</text><text class="l" x="767" y="381">1.5</text><text class="l" x="796" y="381">2</text><text class="l" x="826" y="381">3</text><text class="l" x="856" y="381">4</text><text class="l" x="885" y="381">5</text><text class="l" x="915" y="381">7</text><text class="l" x="945" y="381">10</text><text class="l" x="974" y="381">12</text>
<text class="l" x="737" y="418">15</text><text class="l" x="767" y="418">20</text><text class="l" x="796" y="418">25</text><text class="l" x="826" y="418">30</text><text class="l" x="856" y="418">40</text><text class="l" x="885" y="418">50</text><text class="l" x="915" y="418">70</text><text class="l" x="945" y="418">100</text><text class="l" x="974" y="418">150</text>
<text class="l" x="737" y="455">200</text><text class="l" x="767" y="455">300</text><text class="l" x="796" y="455">400</text><text class="l" x="826" y="455">500</text><text class="l" x="856" y="455">700</text><text class="l" x="885" y="455">1000</text>
</g>
</svg>
</body></html>
